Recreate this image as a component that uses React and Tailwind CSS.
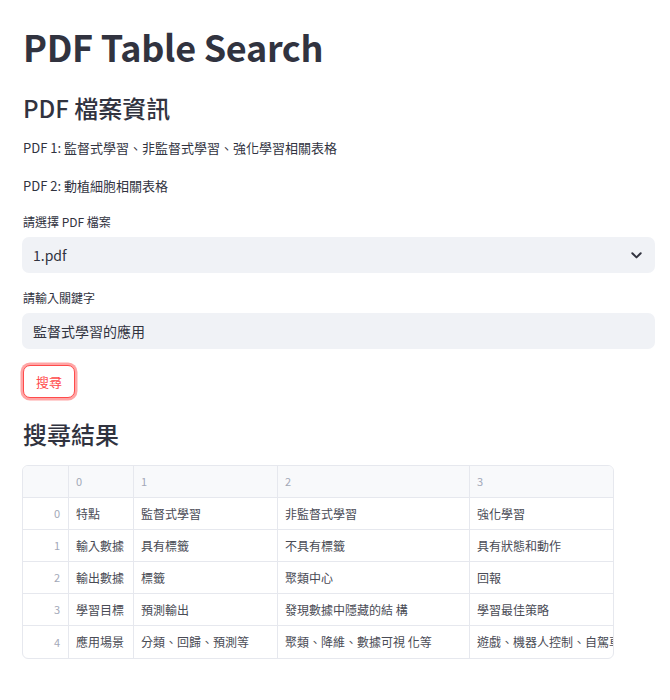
import React from "react";

const rows = [
  ["0", "特點", "監督式學習", "非監督式學習", "強化學習"],
  ["1", "輸入數據", "具有標籤", "不具有標籤", "具有狀態和動作"],
  ["2", "輸出數據", "標籤", "聚類中心", "回報"],
  ["3", "學習目標", "預測輸出", "發現數據中隱藏的結 構", "學習最佳策略"],
  ["4", "應用場景", "分類、回歸、預測等", "聚類、降維、數據可視 化等", "遊戲、機器人控制、自駕車等"],
];

const cols = "grid grid-cols-[46px_65px_144px_192px_1fr]";

export default function App() {
  return (
    <div
      className="w-[670px] h-[700px] bg-white text-[#31333f] overflow-hidden"
      style={{ fontFamily: '"Noto Sans CJK TC", "Noto Sans", sans-serif' }}
    >
      <div className="flex flex-col pl-[23px] pr-[15px]">
        <div className="mt-[26px] h-[40px] flex items-center text-[36px] font-bold tracking-[-0.3px]">
          PDF Table Search
        </div>
        <div className="mt-[28px] h-[28px] flex items-center text-[24px] font-medium">
          PDF 檔案資訊
        </div>
        <div className="mt-[16px] h-[20px] flex items-center text-[13px]">
          PDF 1: 監督式學習、非監督式學習、強化學習相關表格
        </div>
        <div className="mt-[18px] h-[20px] flex items-center text-[13px]">
          PDF 2: 動植細胞相關表格
        </div>
        <div className="mt-[18px] h-[16px] flex items-center text-[12px]">
          請選擇 PDF 檔案
        </div>
        <div className="mt-[7px] h-[36px] -ml-px w-[633px] rounded-[7px] bg-[#f0f2f6] flex items-center justify-between pl-[11px] pr-[13px] text-[14px]">
          <span>1.pdf</span>
          <svg width="11" height="7" viewBox="0 0 11 7">
            <path d="M1.3 1.3 L5.5 5.4 L9.7 1.3" fill="none" stroke="#31333f" strokeWidth="2" strokeLinecap="round" strokeLinejoin="round" />
          </svg>
        </div>
        <div className="mt-[17px] h-[16px] flex items-center text-[12px]">
          請輸入關鍵字
        </div>
        <div className="mt-[7px] h-[36px] -ml-px w-[633px] rounded-[7px] bg-[#f0f2f6] flex items-center pl-[11px] text-[14px]">
          監督式學習的應用
        </div>
        <div className="mt-[16px] h-[33px] flex">
          <button className="h-[33px] w-[52px] rounded-[7px] border border-[#ff4b4b] ring-[2.5px] ring-[#ff4b4b]/50 bg-white text-[13px] text-[#ff4b4b] flex items-center justify-center">
            搜尋
          </button>
        </div>
        <div className="mt-[22px] h-[28px] flex items-center text-[24px] font-medium">
          搜尋結果
        </div>
        <div className="mt-[17px] -ml-px w-[592px] border border-[#e6e8ee] rounded-[6px] overflow-hidden text-[12px]">
          <div className={`${cols} h-[32px] bg-[#f8f9fb] border-b border-[#e6e8ee] text-[11px] text-[#a3a8b8]`}>
            <div className="border-r border-[#e6e8ee]" />
            <div className="border-r border-[#e6e8ee] flex items-center pl-[7px]">0</div>
            <div className="border-r border-[#e6e8ee] flex items-center pl-[7px]">1</div>
            <div className="border-r border-[#e6e8ee] flex items-center pl-[7px]">2</div>
            <div className="flex items-center pl-[7px]">3</div>
          </div>
          {rows.map((r, i) => (
            <div
              key={i}
              className={`${cols} h-[32px] ${i < rows.length - 1 ? "border-b" : ""} border-[#e6e8ee] text-[#494b55]`}
            >
              <div className="border-r border-[#e6e8ee] flex items-center justify-end pr-[8px] text-[11px] text-[#a3a8b8]">
                {r[0]}
              </div>
              <div className="border-r border-[#e6e8ee] flex items-center pl-[7px] whitespace-nowrap overflow-hidden">{r[1]}</div>
              <div className="border-r border-[#e6e8ee] flex items-center pl-[7px] whitespace-nowrap overflow-hidden">{r[2]}</div>
              <div className="border-r border-[#e6e8ee] flex items-center pl-[7px] whitespace-nowrap overflow-hidden">{r[3]}</div>
              <div className="flex items-center pl-[7px] whitespace-nowrap overflow-hidden">{r[4]}</div>
            </div>
          ))}
        </div>
      </div>
    </div>
  );
}
